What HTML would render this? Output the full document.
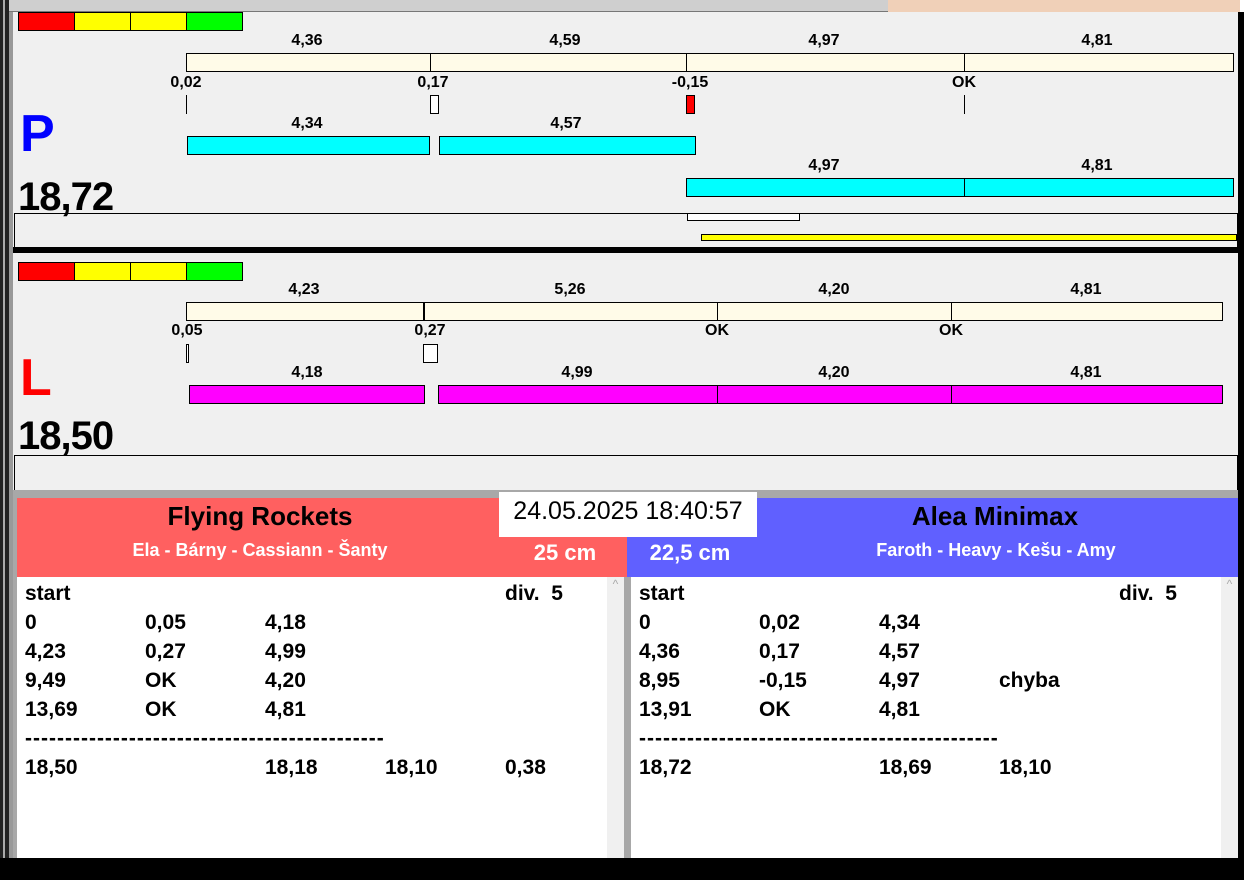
<!DOCTYPE html><html><head><meta charset="utf-8"><style>
body{margin:0;width:1244px;height:880px;background:#f0f0f0;position:relative;overflow:hidden;font-family:"Liberation Sans",Arial,sans-serif}
div{position:absolute;box-sizing:border-box}
.b{border:1px solid #000}
.l{font-weight:bold;font-size:16px;transform:translateX(-50%);white-space:nowrap;line-height:18px;margin-top:1px}
.r{font-weight:bold;font-size:21px;line-height:24px;white-space:nowrap}
.d{font-weight:bold;font-size:21px;line-height:24px;white-space:nowrap;letter-spacing:1px}
</style></head><body>
<div style="left:0;top:0;width:1244px;height:12px;background:#cfcfcf;border-bottom:1px solid #777"></div>
<div style="left:888px;top:0;width:352px;height:12px;background:#f0d0b8"></div>
<div style="left:0;top:0;width:9px;height:880px;background:#222"></div>
<div style="left:3px;top:0;width:2px;height:880px;background:#aaa"></div>
<div style="left:9px;top:12px;width:4px;height:848px;background:#999"></div>
<div style="left:1238px;top:12px;width:6px;height:868px;background:#000"></div>
<div style="left:1240px;top:0;width:4px;height:12px;background:#fff"></div>

<!-- top panel -->
<div class="b" style="left:18px;top:12px;width:57px;height:19px;background:#f00"></div>
<div class="b" style="left:74px;top:12px;width:57px;height:19px;background:#ff0"></div>
<div class="b" style="left:130px;top:12px;width:57px;height:19px;background:#ff0"></div>
<div class="b" style="left:186px;top:12px;width:57px;height:19px;background:#0f0"></div>
<div class="l" style="left:307px;top:31px">4,36</div><div class="l" style="left:565px;top:31px">4,59</div><div class="l" style="left:824px;top:31px">4,97</div><div class="l" style="left:1097px;top:31px">4,81</div>
<div class="b" style="left:186px;top:53px;width:1048px;height:19px;background:#fffbe8"></div>
<div style="left:430px;top:53px;width:1px;height:19px;background:#000"></div><div style="left:686px;top:53px;width:1px;height:19px;background:#000"></div><div style="left:964px;top:53px;width:1px;height:19px;background:#000"></div>
<div class="l" style="left:186px;top:73px">0,02</div><div class="l" style="left:433px;top:73px">0,17</div><div class="l" style="left:690px;top:73px">-0,15</div><div class="l" style="left:964px;top:73px">OK</div>
<div style="left:186px;top:95px;width:1px;height:19px;background:#000"></div>
<div class="b" style="left:430px;top:95px;width:9px;height:19px;background:#fff"></div>
<div class="b" style="left:686px;top:95px;width:9px;height:19px;background:#f00"></div>
<div style="left:964px;top:95px;width:1px;height:19px;background:#000"></div>
<div style="left:20px;top:104px;font-size:52px;font-weight:bold;color:#0000ff;line-height:60px">P</div>
<div class="l" style="left:307px;top:114px">4,34</div><div class="l" style="left:566px;top:114px">4,57</div>
<div class="b" style="left:187px;top:136px;width:243px;height:19px;background:#0ff"></div>
<div class="b" style="left:439px;top:136px;width:257px;height:19px;background:#0ff"></div>
<div class="l" style="left:824px;top:156px">4,97</div><div class="l" style="left:1097px;top:156px">4,81</div>
<div class="b" style="left:686px;top:178px;width:548px;height:19px;background:#0ff"></div>
<div style="left:964px;top:178px;width:1px;height:19px;background:#000"></div>
<div style="left:18px;top:174px;font-size:40px;font-weight:bold;line-height:46px;letter-spacing:-1px">18,72</div>
<div style="left:14px;top:213px;width:1224px;height:35px;border-top:1px solid #000;border-left:1px solid #000;border-right:1px solid #000"></div>
<div class="b" style="left:687px;top:213px;width:113px;height:8px;background:#fff"></div>
<div class="b" style="left:701px;top:234px;width:536px;height:7px;background:#ff0"></div>
<div style="left:13px;top:247px;width:1225px;height:6px;background:#000"></div>

<!-- bottom panel -->
<div class="b" style="left:18px;top:262px;width:57px;height:19px;background:#f00"></div>
<div class="b" style="left:74px;top:262px;width:57px;height:19px;background:#ff0"></div>
<div class="b" style="left:130px;top:262px;width:57px;height:19px;background:#ff0"></div>
<div class="b" style="left:186px;top:262px;width:57px;height:19px;background:#0f0"></div>
<div class="l" style="left:304px;top:280px">4,23</div><div class="l" style="left:570px;top:280px">5,26</div><div class="l" style="left:834px;top:280px">4,20</div><div class="l" style="left:1086px;top:280px">4,81</div>
<div class="b" style="left:186px;top:302px;width:1037px;height:19px;background:#fffbe8"></div>
<div style="left:423px;top:302px;width:2px;height:19px;background:#000"></div><div style="left:717px;top:302px;width:1px;height:19px;background:#000"></div><div style="left:951px;top:302px;width:1px;height:19px;background:#000"></div>
<div class="l" style="left:187px;top:321px">0,05</div><div class="l" style="left:430px;top:321px">0,27</div><div class="l" style="left:717px;top:321px">OK</div><div class="l" style="left:951px;top:321px">OK</div>
<div class="b" style="left:186px;top:344px;width:3px;height:19px;background:#fff"></div>
<div class="b" style="left:423px;top:344px;width:15px;height:19px;background:#fff"></div>
<div style="left:20px;top:348px;font-size:52px;font-weight:bold;color:#f00;line-height:60px">L</div>
<div class="l" style="left:307px;top:363px">4,18</div><div class="l" style="left:577px;top:363px">4,99</div><div class="l" style="left:834px;top:363px">4,20</div><div class="l" style="left:1086px;top:363px">4,81</div>
<div class="b" style="left:189px;top:385px;width:236px;height:19px;background:#f0f"></div>
<div class="b" style="left:438px;top:385px;width:785px;height:19px;background:#f0f"></div>
<div style="left:717px;top:385px;width:1px;height:19px;background:#000"></div><div style="left:951px;top:385px;width:1px;height:19px;background:#000"></div>
<div style="left:18px;top:413px;font-size:40px;font-weight:bold;line-height:46px;letter-spacing:-1px">18,50</div>
<div style="left:14px;top:455px;width:1224px;height:36px;border-top:1px solid #000;border-left:1px solid #000;border-right:1px solid #000"></div>

<div style="left:13px;top:490px;width:1225px;height:8px;background:#a8a8a8"></div>
<div style="left:13px;top:498px;width:4px;height:360px;background:#a8a8a8"></div>
<div style="left:17px;top:498px;width:610px;height:79px;background:#ff6060"></div>
<div style="left:627px;top:498px;width:611px;height:79px;background:#6060ff"></div>
<div style="left:499px;top:492px;width:258px;height:45px;background:#fff;font-size:25px;line-height:38px;text-align:center">24.05.2025 18:40:57</div>
<div style="left:60px;top:501px;width:400px;text-align:center;font-size:26px;font-weight:bold;line-height:30px">Flying Rockets</div>
<div style="left:60px;top:539px;width:400px;text-align:center;font-size:18px;font-weight:bold;color:#fff;line-height:22px">Ela - Bárny - Cassiann - Šanty</div>
<div style="left:505px;top:540px;width:120px;text-align:center;font-size:22px;font-weight:bold;color:#fff;line-height:26px">25 cm</div>
<div style="left:630px;top:540px;width:120px;text-align:center;font-size:22px;font-weight:bold;color:#fff;line-height:26px">22,5 cm</div>
<div style="left:795px;top:501px;width:400px;text-align:center;font-size:26px;font-weight:bold;line-height:30px">Alea Minimax</div>
<div style="left:796px;top:539px;width:400px;text-align:center;font-size:18px;font-weight:bold;color:#fff;line-height:22px">Faroth - Heavy - Kešu - Amy</div>

<div style="left:17px;top:577px;width:590px;height:281px;background:#fff"></div>
<div style="left:607px;top:577px;width:17px;height:281px;background:#f0f0f0;color:#aaa;font-size:12px;text-align:center">^</div>
<div style="left:624px;top:577px;width:7px;height:281px;background:#a8a8a8"></div>
<div style="left:631px;top:577px;width:590px;height:281px;background:#fff"></div>
<div style="left:1221px;top:577px;width:17px;height:281px;background:#f0f0f0;color:#aaa;font-size:12px;text-align:center">^</div>
<div style="left:0;top:858px;width:1244px;height:22px;background:#000"></div>

<div class="r" style="left:25px;top:582px">start</div><div class="r" style="left:505px;top:582px">div.&nbsp; 5</div>
<div class="r" style="left:25px;top:611px">0</div><div class="r" style="left:145px;top:611px">0,05</div><div class="r" style="left:265px;top:611px">4,18</div>
<div class="r" style="left:25px;top:640px">4,23</div><div class="r" style="left:145px;top:640px">0,27</div><div class="r" style="left:265px;top:640px">4,99</div>
<div class="r" style="left:25px;top:669px">9,49</div><div class="r" style="left:145px;top:669px">OK</div><div class="r" style="left:265px;top:669px">4,20</div>
<div class="r" style="left:25px;top:698px">13,69</div><div class="r" style="left:145px;top:698px">OK</div><div class="r" style="left:265px;top:698px">4,81</div>
<div class="d" style="left:25px;top:727px">---------------------------------------------</div>
<div class="r" style="left:25px;top:756px">18,50</div><div class="r" style="left:265px;top:756px">18,18</div><div class="r" style="left:385px;top:756px">18,10</div><div class="r" style="left:505px;top:756px">0,38</div>

<div class="r" style="left:639px;top:582px">start</div><div class="r" style="left:1119px;top:582px">div.&nbsp; 5</div>
<div class="r" style="left:639px;top:611px">0</div><div class="r" style="left:759px;top:611px">0,02</div><div class="r" style="left:879px;top:611px">4,34</div>
<div class="r" style="left:639px;top:640px">4,36</div><div class="r" style="left:759px;top:640px">0,17</div><div class="r" style="left:879px;top:640px">4,57</div>
<div class="r" style="left:639px;top:669px">8,95</div><div class="r" style="left:759px;top:669px">-0,15</div><div class="r" style="left:879px;top:669px">4,97</div><div class="r" style="left:999px;top:669px">chyba</div>
<div class="r" style="left:639px;top:698px">13,91</div><div class="r" style="left:759px;top:698px">OK</div><div class="r" style="left:879px;top:698px">4,81</div>
<div class="d" style="left:639px;top:727px">---------------------------------------------</div>
<div class="r" style="left:639px;top:756px">18,72</div><div class="r" style="left:879px;top:756px">18,69</div><div class="r" style="left:999px;top:756px">18,10</div>
</body></html>
